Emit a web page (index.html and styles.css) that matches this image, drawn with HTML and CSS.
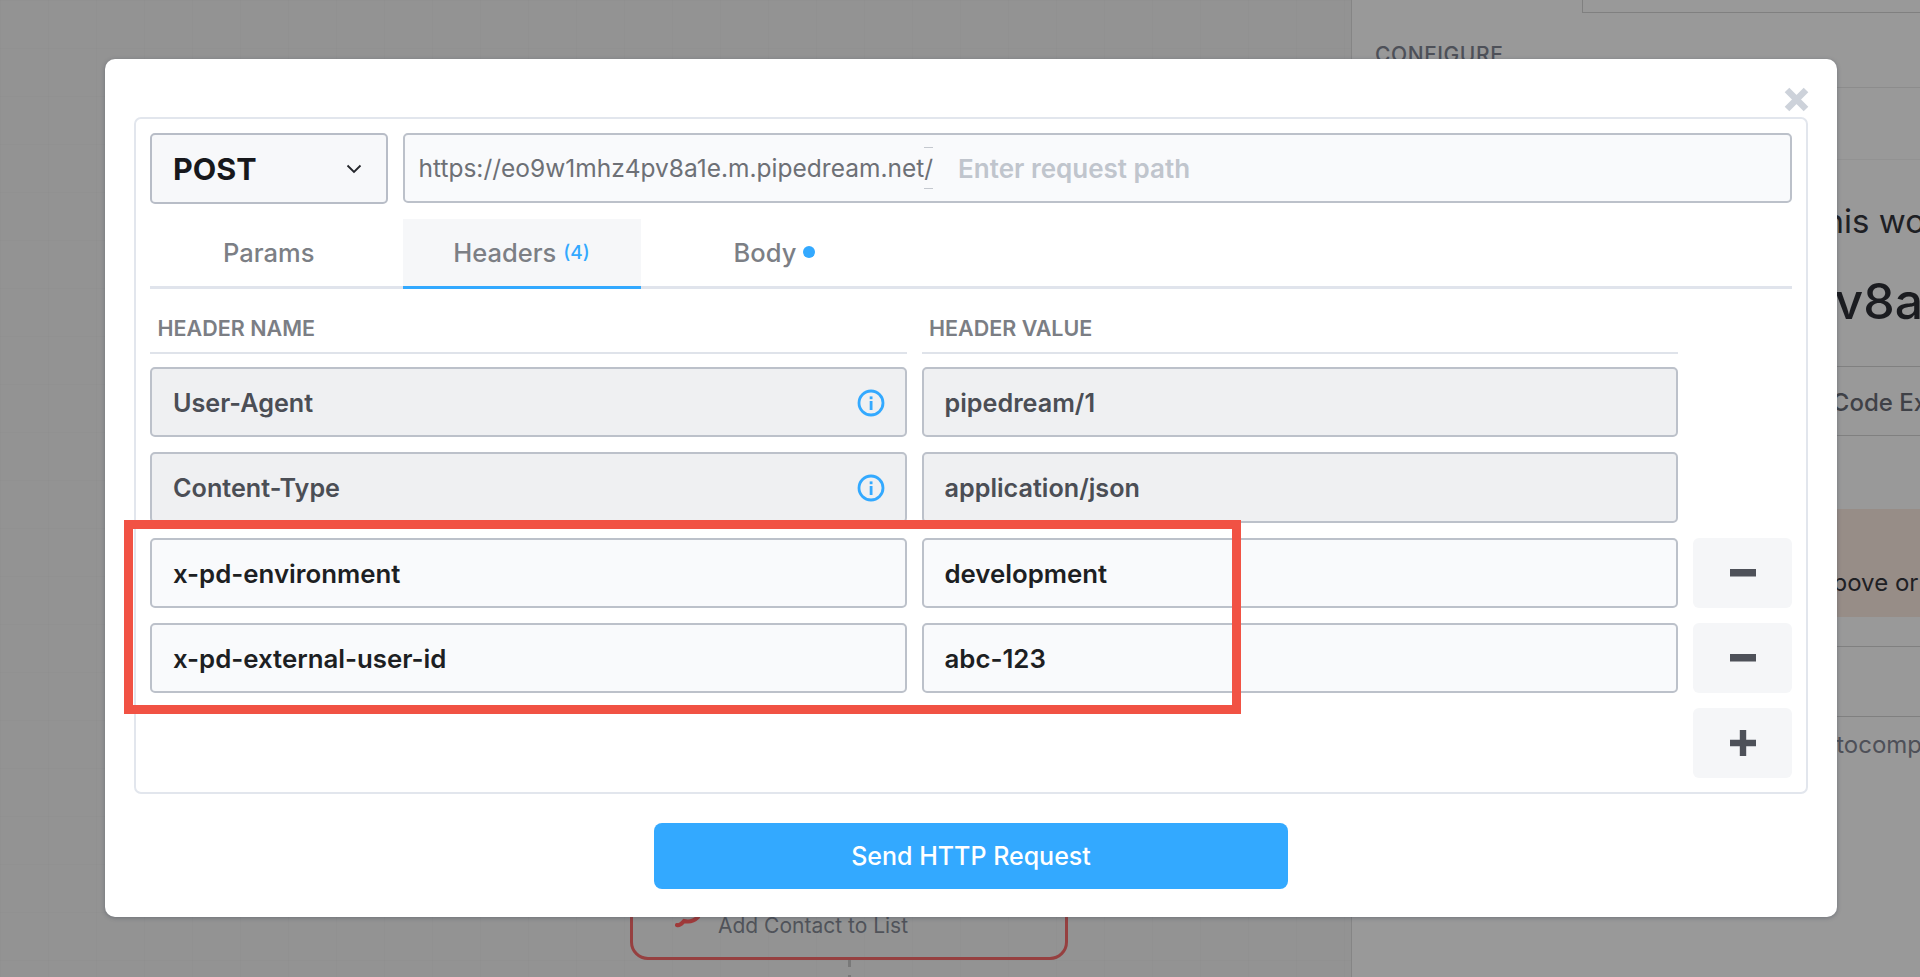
FILE: index.html
```html
<!DOCTYPE html>
<html lang="en">
<head>
<meta charset="utf-8">
<title>Send HTTP Request</title>
<link rel="stylesheet" href="styles.css">
</head>
<body>
<div class="page">
  <main class="canvas">
    <div class="node">
      <svg class="node-icon" width="28" height="12" viewBox="0 0 28 12"><path d="M2 9 C5 10 7 7 9 5 C13 6 18 6 23 1" fill="none" stroke="#a03a3a" stroke-width="4" stroke-linecap="round"/></svg>
      <span class="node-label">Add Contact to List</span>
    </div>
    <div class="connector"></div>
  </main>
  <aside class="sidebar">
    <div class="top-box"></div>
    <section class="side-config"><h3 class="side-heading">CONFIGURE</h3></section>
    <section class="side-blank"></section>
    <section class="side-endpoint">
      <p class="side-lead">Trigger this workflow by</p>
      <p class="side-url">eo9w1mhz4pv8a1e.m.pipedream.net</p>
    </section>
    <section class="side-code">Generate Code Examples</section>
    <section class="side-spacer"></section>
    <section class="side-note">Send a request above or</section>
    <section class="side-gap"></section>
    <section class="side-field"></section>
    <section class="side-auto">Disable autocomplete</section>
  </aside>
</div>

<div class="modal">
  <svg class="close" width="25" height="25" viewBox="0 0 25 25"><path d="M3 3 L22 22 M22 3 L3 22" stroke="#cdd2da" stroke-width="6.5" fill="none"/></svg>
  <div class="panel">
    <div class="request-row">
      <div class="method">
        <span class="method-name">POST</span>
        <svg class="chevron" width="16" height="10" viewBox="0 0 16 10"><path d="M1.5 1.5 L8 8 L14.5 1.5" stroke="#24262b" stroke-width="1.8" fill="none"/></svg>
      </div>
      <div class="url">
        <span class="url-base">https://eo9w1mhz4pv8a1e.m.pipedream.net/<span class="caret"></span></span>
        <span class="url-path">Enter request path</span>
      </div>
    </div>
    <div class="tabs">
      <div class="tab">Params</div>
      <div class="tab tab-active">Headers<span class="count">(4)</span></div>
      <div class="tab">Body<span class="dot"></span></div>
    </div>
    <div class="table">
      <div class="th">HEADER NAME</div>
      <div class="th">HEADER VALUE</div>
      <div class="th-empty"></div>

      <div class="cell cell-locked"><span>User-Agent</span>
        <svg class="info" width="28" height="28" viewBox="0 0 28 28"><circle cx="14" cy="14" r="12" fill="none" stroke="#33a9ff" stroke-width="2.8"/><rect x="12.7" y="12" width="2.8" height="9" fill="#33a9ff"/><rect x="12.7" y="7.4" width="2.8" height="2.8" fill="#33a9ff"/></svg>
      </div>
      <div class="cell cell-locked"><span>pipedream/1</span></div>
      <div class="cell-empty"></div>

      <div class="cell cell-locked"><span>Content-Type</span>
        <svg class="info" width="28" height="28" viewBox="0 0 28 28"><circle cx="14" cy="14" r="12" fill="none" stroke="#33a9ff" stroke-width="2.8"/><rect x="12.7" y="12" width="2.8" height="9" fill="#33a9ff"/><rect x="12.7" y="7.4" width="2.8" height="2.8" fill="#33a9ff"/></svg>
      </div>
      <div class="cell cell-locked"><span>application/json</span></div>
      <div class="cell-empty"></div>

      <div class="cell cell-custom"><span>x-pd-environment</span></div>
      <div class="cell cell-custom"><span>development</span></div>
      <div class="icon-btn"><svg width="26" height="8" viewBox="0 0 26 8"><rect width="26" height="7.5" fill="#4e5159"/></svg></div>

      <div class="cell cell-custom"><span>x-pd-external-user-id</span></div>
      <div class="cell cell-custom"><span>abc-123</span></div>
      <div class="icon-btn"><svg width="26" height="8" viewBox="0 0 26 8"><rect width="26" height="7.5" fill="#4e5159"/></svg></div>

      <div class="cell-empty"></div>
      <div class="cell-empty"></div>
      <div class="icon-btn"><svg width="26" height="26" viewBox="0 0 26 26"><path d="M9.8 0h6.4v9.7H26v6.6h-9.8V26H9.8v-9.7H0V9.7h9.8z" fill="#4e5159"/></svg></div>
    </div>
  </div>
  <button class="send" type="button">Send HTTP Request</button>
  <div class="callout"></div>
</div>
</body>
</html>
```
FILE: styles.css
```css
* { box-sizing: border-box; }
html, body { margin: 0; height: 100%; overflow: hidden; }
body { font-family: Inter, "Liberation Sans", sans-serif; background: #949494; }

/* dimmed page behind the modal */
.page { display: flex; height: 977px; }
.canvas {
  position: relative;
  width: 1352px;
  background-color: #939393;
  background-image:
    linear-gradient(to right, rgba(0,0,0,.01) 1px, transparent 1px),
    linear-gradient(to bottom, rgba(0,0,0,.01) 1px, transparent 1px);
  background-size: 48px 48px;
  border-right: 1px solid #858585;
}
.node {
  position: absolute;
  left: 630px;
  top: 800px;
  width: 438px;
  height: 160px;
  border: 3px solid #964040;
  border-radius: 18px;
}
.node-icon { position: absolute; left: 42px; top: 113px; }
.node-label {
  position: absolute;
  left: 85px;
  top: 110px;
  font-size: 21px;
  line-height: 26px;
  color: #50535a;
  white-space: nowrap;
}
.connector {
  position: absolute;
  left: 848px;
  top: 960px;
  width: 3px;
  height: 17px;
  background: repeating-linear-gradient(to bottom, #797979 0 7px, transparent 7px 15px);
}

.sidebar { flex: 1; background: #999; overflow: hidden; min-width: 0; }
.sidebar section { white-space: nowrap; }
.top-box {
  margin-left: 230px;
  height: 13px;
  border-left: 1px solid #808080;
  border-bottom: 1px solid #808080;
}
.side-config { height: 75px; border-bottom: 1px solid #8c8c8c; padding: 29px 0 0 23px; }
.side-heading { margin: 0; font-size: 21px; line-height: 26px; font-weight: 500; letter-spacing: .6px; color: #4d5058; }
.side-blank { height: 72px; border-bottom: 1px solid #929292; }
.side-endpoint { height: 207px; border-bottom: 1px solid #808080; overflow: hidden; }
.side-lead { margin: 0; padding: 41px 0 0 340px; font-size: 33px; line-height: 40px; color: #1e2024; white-space: nowrap; }
.side-url { margin: 0; padding: 30px 0 0 164px; font-size: 50px; line-height: 60px; font-weight: 500; color: #1b1c20; white-space: nowrap; }
.side-code { height: 69px; border-bottom: 1px solid #808080; padding: 21px 0 0 368px; font-size: 24px; line-height: 30px; font-weight: 500; color: #3f4147; }
.side-spacer { height: 73px; }
.side-note { height: 108px; background: #978d87; padding: 59px 0 0 289px; font-size: 24px; line-height: 30px; color: #1e2024; }
.side-gap { height: 30px; border-bottom: 1px solid #808080; }
.side-field { height: 70px; border-bottom: 1px solid #808080; }
.side-auto { padding: 13px 0 0 366px; font-size: 24px; line-height: 30px; color: #4e5058; }

/* modal */
.modal {
  position: absolute;
  left: 105px;
  top: 59px;
  width: 1732px;
  height: 858px;
  padding: 58px 29px 0;
  background: #fff;
  border-radius: 10px;
  box-shadow: 0 1px 4px rgba(40,50,70,.35);
}
.close { position: absolute; left: 1679px; top: 28px; }
.panel {
  height: 677px;
  padding: 14px;
  border: 2px solid #e2e6ed;
  border-radius: 7px;
}
.request-row { display: grid; grid-template-columns: 237.5px 1fr; gap: 15px; }
.method {
  height: 71px;
  display: flex;
  align-items: center;
  justify-content: space-between;
  padding: 0 24px 0 21px;
  background: #f7f8fa;
  border: 2px solid #b8bdc7;
  border-radius: 5px;
}
.method-name { font-size: 30.5px; font-weight: 700; color: #17181c; }
.url {
  height: 70px;
  display: flex;
  align-items: center;
  padding: 0 14px;
  background: #f9fafc;
  border: 2px solid #bcc1ca;
  border-radius: 5px;
}
.url-base { position: relative; font-size: 24.5px; color: #6d7076; }
.caret {
  position: absolute;
  right: 0;
  top: -6px;
  bottom: -6px;
  width: 9px;
  border-top: 1.5px solid #c4c8cf;
  border-bottom: 1.5px solid #c4c8cf;
}
.url-path { margin-left: 25px; font-size: 26px; font-weight: 600; color: #c0c5cd; }

.tabs {
  display: grid;
  grid-template-columns: 237.5px 238px 238px;
  gap: 15px;
  margin-top: 15px;
  border-bottom: 3px solid #e0e4ec;
}
.tab {
  height: 70px;
  margin-bottom: -3px;
  padding-bottom: 1px;
  border-bottom: 3px solid transparent;
  display: flex;
  align-items: center;
  justify-content: center;
  font-size: 25.5px;
  font-weight: 500;
  color: #7c7f85;
}
.tab-active { background: #f6f7f9; border-bottom-color: #33a9ff; }
.count { margin-left: 7px; font-size: 19px; color: #33a9ff; }
.dot { width: 12px; height: 12px; margin-left: 7px; border-radius: 50%; background: #33a9ff; }

.table {
  display: grid;
  grid-template-columns: 1fr 1fr 99px;
  column-gap: 15px;
  row-gap: 15px;
  grid-template-rows: 63px repeat(5, 70.25px);
}
.th {
  display: flex;
  align-items: flex-end;
  padding: 0 0 12px 7.5px;
  border-bottom: 2px solid #dfe3ea;
  font-size: 21.5px;
  line-height: 24px;
  font-weight: 600;
  color: #7b7e84;
  height: 65px;
  margin-bottom: -2px;
}
.th-empty { height: 63px; }
.cell {
  display: flex;
  align-items: center;
  justify-content: space-between;
  padding: 1px 20px 0 21px;
  background: #f9fafc;
  border: 2px solid #bcc1ca;
  border-radius: 5px;
  font-size: 25.2px;
  font-weight: 600;
  color: #1d1f23;
}
.cell-custom { padding-top: 2px; font-size: 25.8px; }
.cell-locked { background: #eff0f2; color: #4b4e55; }
.icon-btn {
  display: flex;
  align-items: center;
  justify-content: center;
  background: #f5f6f8;
  border-radius: 6px;
}
.send {
  display: block;
  width: 634px;
  height: 66px;
  margin: 29px auto 0;
  border: 0;
  border-radius: 8px;
  background: #33a9ff;
  color: #fff;
  font-family: inherit;
  font-size: 25px;
  font-weight: 500;
}
.callout {
  position: absolute;
  left: 19px;
  top: 461px;
  width: 1117px;
  height: 194px;
  border: 9px solid #f15244;
}
```
